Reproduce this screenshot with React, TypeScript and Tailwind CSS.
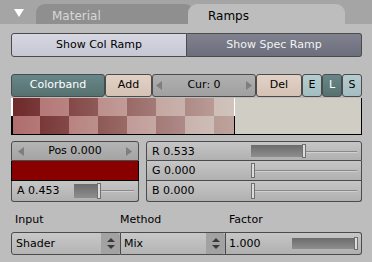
import React from 'react';

const btn = 'flex items-center justify-center border border-[#4b4b4b] rounded-[3px] bg-linear-to-b';

const Arrow = ({ dir }: { dir: 'l' | 'r' }) => (
    <svg width="6" height="9" viewBox="0 0 6 9" className="shrink-0">
        {dir === 'l' ? <path d="M6 0 L0 4.5 L6 9 Z" fill="#7e7e7e" /> : <path d="M0 0 L6 4.5 L0 9 Z" fill="#7e7e7e" />}
    </svg>
);

const UpDown = () => (
    <div className="w-[19px] h-full flex items-center justify-center bg-[#a2a2a2] rounded-r-[3px]">
        <svg width="8" height="11" viewBox="0 0 8 11">
            <path d="M4 0 L8 4 L0 4 Z" fill="#3a3a3a" />
            <path d="M0 7 L8 7 L4 11 Z" fill="#3a3a3a" />
        </svg>
    </div>
);

// numeric slider field like Blender's NUMSLI
const SliderField = ({ label, trackLeft, fill, className }: { label: string; trackLeft: string; fill: number; className: string }) => (
    <div className={`relative h-[20px] border border-[#4b4b4b] rounded-[3px] bg-linear-to-b from-[#c6c6c6] to-[#b0b0b0] ${className}`}>
        <span className="absolute left-[5px] top-[2px] text-[11px] text-black">{label}</span>
        <div className={`absolute top-[3px] bottom-[3px] right-[4px] ${trackLeft}`}>
            <div className="absolute left-0 right-0 top-[6px] h-[1px] bg-[#8a8a8a]" />
            <div className="absolute left-0 right-0 top-[7px] h-[1px] bg-[#d0d0d0]" />
            <div className="absolute left-0 top-0 bottom-0 bg-linear-to-b from-[#6c6c6c] to-[#8e8e8e]" style={{ width: fill }} />
            <div className="absolute top-[-1px] bottom-[-1px] w-[4px] border border-[#707070] bg-[#dcdcdc]" style={{ left: Math.max(fill - 2, 0) }} />
        </div>
    </div>
);

type RGB = [number, number, number];
const DARK0: RGB = [110, 40, 40];
const DARK1: RGB = [192, 166, 160];
const LIGHT0: RGB = [176, 108, 108];
const LIGHT1: RGB = [208, 198, 190];
const RAMP_W = 223;
const CELL = 29;

const mix = (a: RGB, b: RGB, t: number) =>
    `rgb(${a.map((v, i) => Math.round(v + (b[i] - v) * t)).join(',')})`;

const cellBg = (col: number, dark: boolean) => {
    const t0 = Math.min((col * CELL) / RAMP_W, 1);
    const t1 = Math.min(((col + 1) * CELL) / RAMP_W, 1);
    const [a, b] = dark ? [DARK0, DARK1] : [LIGHT0, LIGHT1];
    return `linear-gradient(to right, ${mix(a, b, t0)}, ${mix(a, b, t1)})`;
};

const App: React.FC = () => {
    const cols = [0, 1, 2, 3, 4, 5, 6, 7];

    return (
        <div className="w-[372px] h-[262px] bg-[#bdbdbd] overflow-hidden text-[11px] text-black" style={{ fontFamily: '"DejaVu Sans", sans-serif' }}>
            {/* header tabs */}
            <div className="h-[24px] bg-[#a5a5a5] flex items-end relative">
                <svg width="10" height="8" viewBox="0 0 10 8" className="absolute left-[14px] top-[9px]">
                    <path d="M0 0 L10 0 L5 8 Z" fill="#ffffff" />
                </svg>
                <div className="ml-[36px] w-[158px] h-[20px] rounded-t-[9px] bg-[#8f8f8f] text-[#d8d8d8] text-[12px] pl-[16px] pt-[3px]">Material</div>
                <div className="-ml-[6px] w-[157px] h-[20px] rounded-t-[9px] bg-[#bdbdbd] text-[12px] pl-[20px] pt-[3px]">Ramps</div>
            </div>

            <div className="pl-[11px] pt-[9px]">
                <div className="flex h-[24px] w-[351px]">
                    <div className={`${btn} w-[176px] from-[#d6d7e2] to-[#c6c7d3] rounded-r-none`}>Show Col Ramp</div>
                    <div className={`${btn} w-[175px] border-l-0 from-[#80828f] to-[#6c6e7c] text-[#f2f2f2] rounded-l-none`}>Show Spec Ramp</div>
                </div>

                <div className="flex h-[23px] w-[351px] mt-[17px]">
                    <div className={`${btn} w-[94px] from-[#68878a] to-[#56716f] text-white`}>Colorband</div>
                    <div className={`${btn} w-[47px] from-[#e2d2c6] to-[#d4c2b4]`}>Add</div>
                    <div className="flex items-center justify-between px-[3px] w-[104px] border border-[#4b4b4b] rounded-[3px] bg-linear-to-b from-[#b0b0b0] to-[#a0a0a0]">
                        <Arrow dir="l" />
                        <span>Cur: 0</span>
                        <Arrow dir="r" />
                    </div>
                    <div className={`${btn} w-[46px] from-[#e2d2c6] to-[#d4c2b4]`}>Del</div>
                    <div className={`${btn} w-[20px] from-[#b6cdd0] to-[#a2bcc0]`}>E</div>
                    <div className={`${btn} w-[20px] from-[#68878a] to-[#56716f] text-white`}>L</div>
                    <div className={`${btn} w-[20px] from-[#b6cdd0] to-[#a2bcc0]`}>S</div>
                </div>

                {/* colorband preview */}
                <div className="relative w-[351px] h-[37px] mt-[1px] bg-[#d0cdc4] border-r border-b border-black flex">
                    <div className="w-[223px] h-full grid grid-cols-[repeat(8,29px)] grid-rows-2 overflow-hidden">
                        {cols.map(i => (
                            <React.Fragment key={i}>
                                <div className="row-start-1" style={{ gridColumnStart: i + 1, backgroundImage: cellBg(i, i % 2 === 0) }} />
                                <div className="row-start-2" style={{ gridColumnStart: i + 1, backgroundImage: cellBg(i, i % 2 === 1) }} />
                            </React.Fragment>
                        ))}
                    </div>
                    <div className="absolute left-0 top-0 w-[2px] h-1/2 bg-white" />
                    <div className="absolute left-0 bottom-0 w-[2px] h-1/2 bg-black" />
                    <div className="absolute left-[223px] top-0 w-[1px] h-1/2 bg-white" />
                    <div className="absolute left-[223px] bottom-0 w-[1px] h-1/2 bg-black" />
                </div>

                <div className="flex gap-[7px] mt-[6px] w-[351px]">
                    <div className="w-[128px] flex flex-col">
                        <div className="flex items-center justify-between px-[6px] h-[20px] border border-[#4b4b4b] rounded-t-[3px] bg-linear-to-b from-[#b4b4b4] to-[#a4a4a4]">
                            <Arrow dir="l" />
                            <span>Pos 0.000</span>
                            <Arrow dir="r" />
                        </div>
                        <div className="h-[20px] bg-[#880000] border border-black border-t-0" />
                        <SliderField label="A 0.453" trackLeft="left-[62px]" fill={25} className="rounded-t-none border-t-0 h-[21px]" />
                    </div>
                    <div className="w-[216px] flex flex-col">
                        <SliderField label="R 0.533" trackLeft="left-[104px]" fill={53} className="rounded-b-none" />
                        <SliderField label="G 0.000" trackLeft="left-[104px]" fill={0} className="rounded-none border-t-0" />
                        <SliderField label="B 0.000" trackLeft="left-[104px]" fill={0} className="rounded-t-none border-t-0 h-[21px]" />
                    </div>
                </div>

                <div className="flex mt-[11px] h-[14px] leading-[14px] w-[351px]">
                    <span className="w-[105px] pl-[4px]">Input</span>
                    <span className="w-[109px] pl-[4px]">Method</span>
                    <span className="pl-[4px]">Factor</span>
                </div>

                <div className="flex mt-[5px] h-[23px] w-[351px]">
                    <div className="flex w-[110px] border border-[#4b4b4b] rounded-l-[3px] bg-linear-to-b from-[#c8c8c8] to-[#b4b4b4]">
                        <span className="flex-1 pl-[4px] leading-[21px]">Shader</span>
                        <UpDown />
                    </div>
                    <div className="flex w-[105px] border border-l-0 border-[#4b4b4b] bg-linear-to-b from-[#c8c8c8] to-[#b4b4b4]">
                        <span className="flex-1 pl-[3px] leading-[21px]">Mix</span>
                        <UpDown />
                    </div>
                    <div className="relative w-[136px] border border-l-0 border-[#4b4b4b] rounded-r-[3px] bg-linear-to-b from-[#c6c6c6] to-[#b0b0b0]">
                        <span className="absolute left-[3px] top-[3px]">1.000</span>
                        <div className="absolute left-[66px] right-[5px] top-[5px] bottom-[5px] bg-linear-to-b from-[#6c6c6c] to-[#8e8e8e]" />
                        <div className="absolute right-[3px] top-[4px] bottom-[4px] w-[4px] border border-[#707070] bg-[#dcdcdc]" />
                    </div>
                </div>
            </div>
        </div>
    );
};

export default App;
